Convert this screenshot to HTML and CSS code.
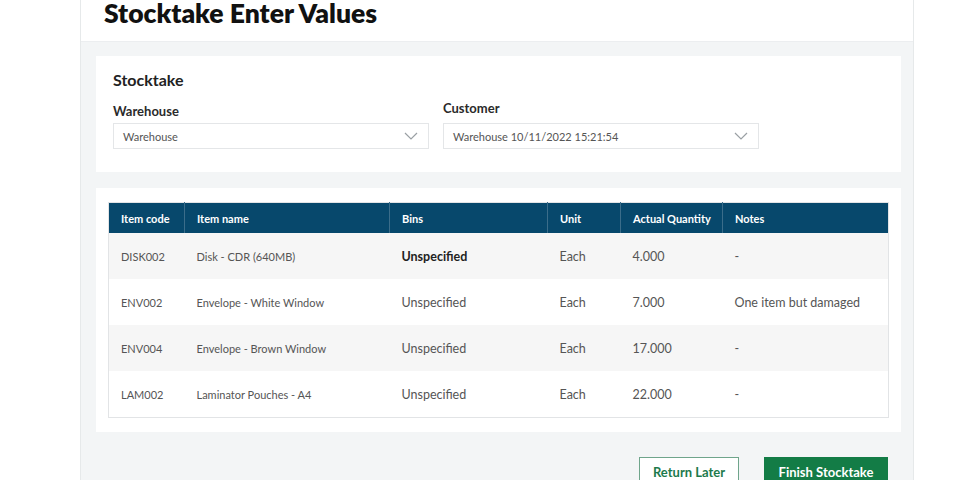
FILE: index.html
```html
<!DOCTYPE html>
<html lang="en">
<head>
    <meta charset="UTF-8">
    <meta name="viewport" content="width=device-width, initial-scale=1.0">
    <title>Stocktake Enter Values</title>
    <link rel="stylesheet" href="styles.css">
</head>
<body>
    <div class="page">
        <!--Encabezado-->
        <header class="page-header">
            <h1>Stocktake Enter Values</h1>
        </header>

        <main class="page-body">
            <!--Filtros-->
            <section class="card filters">
                <h2>Stocktake</h2>
                <div class="fields">
                    <div class="field">
                        <label for="warehouse">Warehouse</label>
                        <div class="select" id="warehouse">
                            <span>Warehouse</span>
                            <svg width="14" height="8" viewBox="0 0 14 8"><path d="M1 1l6 6 6-6" fill="none" stroke="#9aa0a4" stroke-width="1.2"/></svg>
                        </div>
                    </div>
                    <div class="field field-up">
                        <label for="customer">Customer</label>
                        <div class="select" id="customer">
                            <span>Warehouse 10/11/2022 15:21:54</span>
                            <svg width="14" height="8" viewBox="0 0 14 8"><path d="M1 1l6 6 6-6" fill="none" stroke="#9aa0a4" stroke-width="1.2"/></svg>
                        </div>
                    </div>
                </div>
            </section>

            <!--Tabla de artículos-->
            <section class="card items">
                <table>
                    <thead>
                        <tr>
                            <th class="c-code">Item code</th>
                            <th class="c-name">Item name</th>
                            <th class="c-bins">Bins</th>
                            <th class="c-unit">Unit</th>
                            <th class="c-qty">Actual Quantity</th>
                            <th>Notes</th>
                        </tr>
                    </thead>
                    <tbody>
                        <tr>
                            <td class="small">DISK002</td>
                            <td class="small">Disk - CDR (640MB)</td>
                            <td class="strong">Unspecified</td>
                            <td>Each</td>
                            <td>4.000</td>
                            <td>-</td>
                        </tr>
                        <tr>
                            <td class="small">ENV002</td>
                            <td class="small">Envelope - White Window</td>
                            <td>Unspecified</td>
                            <td>Each</td>
                            <td>7.000</td>
                            <td>One item but damaged</td>
                        </tr>
                        <tr>
                            <td class="small">ENV004</td>
                            <td class="small">Envelope - Brown Window</td>
                            <td>Unspecified</td>
                            <td>Each</td>
                            <td>17.000</td>
                            <td>-</td>
                        </tr>
                        <tr>
                            <td class="small">LAM002</td>
                            <td class="small">Laminator Pouches - A4</td>
                            <td>Unspecified</td>
                            <td>Each</td>
                            <td>22.000</td>
                            <td>-</td>
                        </tr>
                    </tbody>
                </table>
            </section>

            <!--Acciones-->
            <div class="actions">
                <button class="btn btn-outline">Return Later</button>
                <button class="btn btn-primary">Finish Stocktake</button>
            </div>
        </main>
    </div>
</body>
</html>
```

FILE: styles.css
```css
/*Estilos básicos*/
body {
    font-family: Lato, "Open Sans", sans-serif;
    margin: 0;
    padding: 0;
    background-color: #fff;
    color: #333;
}

.page {
    margin-left: 80px;
    width: 832px;
    border-left: 1px solid #e6e9ea;
    border-right: 1px solid #e6e9ea;
    min-height: 480px;
    background-color: #f3f5f6;
}

.page-header {
    background-color: #fff;
    height: 42px;
    padding-left: 23px;
    border-bottom: 1px solid #eceef0;
    box-sizing: border-box;
}

.page-header h1 {
    margin: 0;
    font-size: 26.5px;
    line-height: 26px;
    font-weight: 800;
    color: #111;
}

.page-body {
    padding: 14px 12px 0 15px;
}

.card {
    background-color: #fff;
    margin-bottom: 16px;
}

.filters {
    padding: 14px 17px 0;
    height: 116px;
    box-sizing: border-box;
}

.filters h2 {
    margin: 0 0 14px;
    font-size: 16px;
    font-weight: 700;
    color: #222;
}

.fields {
    display: flex;
    gap: 14px;
}

.field {
    width: 316px;
}

.field-up {
    margin-top: -3px;
}

.field label {
    display: block;
    font-size: 13px;
    font-weight: 700;
    color: #2a2a2a;
    margin-bottom: 4px;
}

.field-up label {
    margin-bottom: 7px;
}

.select {
    height: 26px;
    border: 1px solid #e4e6e8;
    box-sizing: border-box;
    display: flex;
    align-items: center;
    justify-content: space-between;
    padding: 0 10px 0 9px;
    font-size: 11px;
    color: #555;
}

.items {
    padding: 14px 12px 14px;
}

table {
    width: 100%;
    table-layout: fixed;
    border-collapse: collapse;
    border: 1px solid #e2e4e6;
}

th {
    background-color: #07486c;
    color: #fff;
    font-size: 11px;
    font-weight: 700;
    text-align: left;
    white-space: nowrap;
    height: 30px;
    padding: 0 12px;
    border-left: 1px solid #3b6d8a;
}

th:first-child {
    border-left: none;
}

.c-code { width: 51px; }
.c-name { width: 180px; }
.c-bins { width: 133px; }
.c-unit { width: 48px; }
.c-qty { width: 77px; }

td {
    height: 46px;
    padding: 0 12px;
    font-size: 12.5px;
    color: #555;
    white-space: nowrap;
}

tbody tr:nth-child(odd) {
    background-color: #f6f6f6;
}

td.small {
    font-size: 11px;
}

td.strong {
    font-weight: 700;
    color: #222;
}

.actions {
    display: flex;
    justify-content: flex-end;
    gap: 25px;
    padding: 9px 13px 0 0;
}

.btn {
    font-family: Lato, "Open Sans", sans-serif;
    font-size: 13px;
    font-weight: 700;
    height: 30px;
    padding: 0;
    white-space: nowrap;
    cursor: pointer;
}

.btn-outline {
    background-color: #fff;
    color: #1d7a4c;
    border: 1px solid #6fa58b;
    width: 100px;
}

.btn-primary {
    background-color: #137c46;
    color: #fff;
    border: 1px solid #137c46;
    width: 124px;
}
```
